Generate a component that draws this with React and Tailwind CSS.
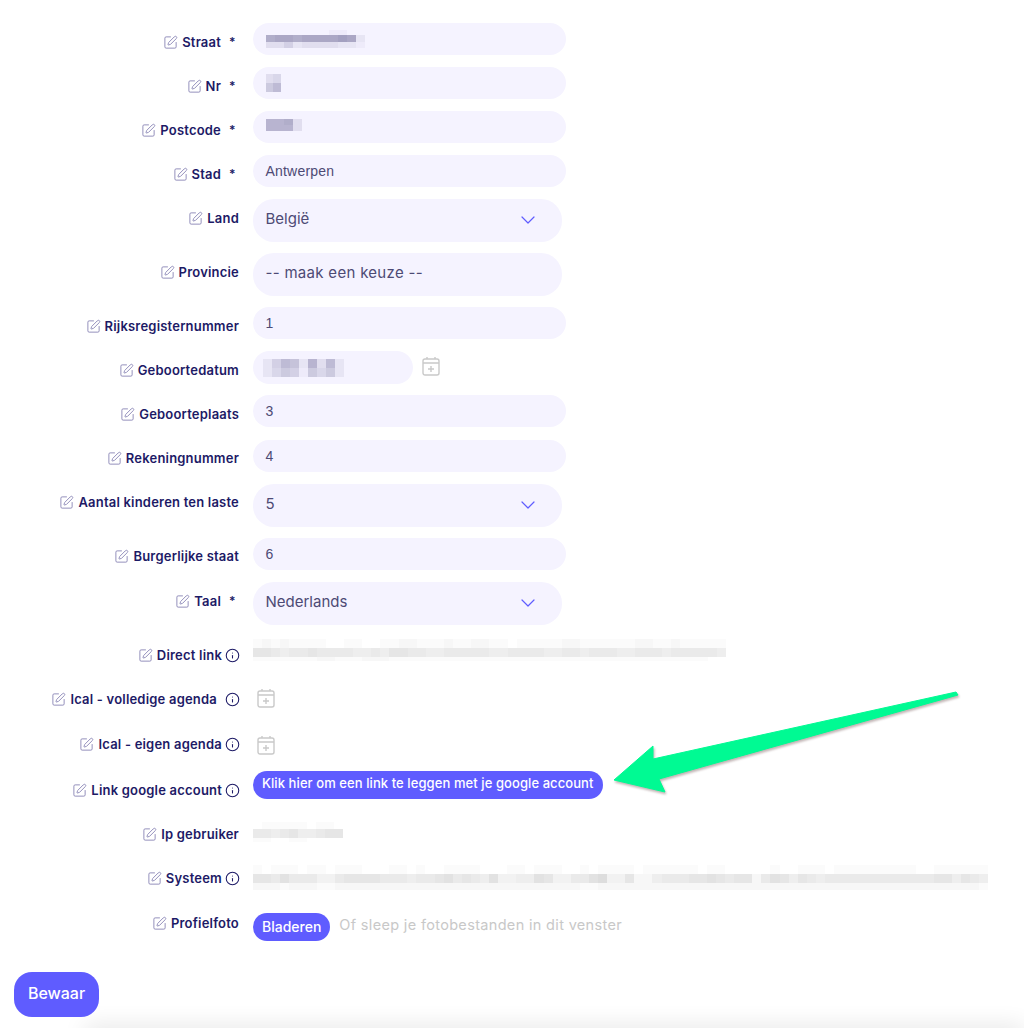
import React from 'react'
import { SquarePen, Info, ChevronDown } from 'lucide-react'

// opacity per cell, one hex digit per block of the pixelated (censored) values
function Mosaic({ rows, cell = 9, heights, color = '#8f8bb0', className = '' }) {
  return (
    <div className={'blur-[0.6px] ' + className}>
      {rows.map((row, i) => (
        <div key={i} className="flex">
          {row.split('').map((c, j) => (
            <div key={j} style={{ width: cell, height: heights[i], background: color, opacity: parseInt(c, 16) / 15 }} />
          ))}
        </div>
      ))}
    </div>
  )
}

function CalendarIcon({ className = '' }) {
  return (
    <svg viewBox="0 0 18 20" width="18" height="20" fill="none" stroke="#c9c9c9" strokeWidth="1.4" className={className}>
      <rect x="1" y="3" width="16" height="16" rx="2" />
      <path d="M1 7h16M5 1v2M13 1v2M9 10v6M6 13h6" />
    </svg>
  )
}

function Label({ text, required, info, infoGap = 'ml-[3px]', className = 'pt-[10px]' }) {
  return (
    <div className={'w-[239px] shrink-0 flex items-center justify-end text-[13px] leading-[18px] font-semibold tracking-[0.2px] text-[#1d1a66] ' + className}>
      <SquarePen size={15} strokeWidth={1.5} className="text-[#8d89b8] mr-[4px] shrink-0" />
      <span className="whitespace-nowrap">{text}</span>
      {required && <span className="ml-[8px] mr-[4px] w-[6px] text-[12px]">*</span>}
      {info && <Info size={15} strokeWidth={1.7} className={'shrink-0 text-[#1d1a66] -mr-[1px] ' + infoGap} />}
    </div>
  )
}

function TextRow({ label, required, value, mosaic, labelClass, tall }) {
  return (
    <div className={'flex items-start h-[32px] ' + (tall ? 'mb-[13px]' : 'mb-[12px]')}>
      <Label text={label} required={required} className={labelClass} />
      <div className="ml-[14px] w-[313px] h-[32px] rounded-[16px] bg-[#f5f3ff] flex items-center pl-[12.5px] text-[14px] tracking-[0.2px] text-[#4d4a75] font-['Liberation_Sans',sans-serif]">
        {value}
        {mosaic}
      </div>
    </div>
  )
}

function SelectRow({ label, required, value, labelClass, noArrow, valueClass = '' }) {
  return (
    <div className="flex items-start h-[43px] mb-[11px]">
      <Label text={label} required={required} className={labelClass} />
      <div className="ml-[14px] w-[309px] h-[43px] rounded-[21px] bg-[#f5f3ff] flex items-center justify-between pl-[12.5px] pr-[22px] text-[15px] text-[#4d4a75]">
        <span className={'pb-[2px] ' + valueClass}>{value}</span>
        {!noArrow && <ChevronDown size={24} strokeWidth={1.2} className="text-[#5f5cff] -mt-[1px]" />}
      </div>
    </div>
  )
}

export default function App() {
  return (
    <div className="relative h-[1028px] overflow-hidden bg-white font-['Inter',sans-serif]">
      <div className="pt-[23px]">
        <TextRow
          label="Straat"
          required
          mosaic={<Mosaic rows={['00000001100', 'abbabbbbcb2', '33523333221']} heights={[5, 7, 6]} />}
        />
        <TextRow label="Nr" required mosaic={<Mosaic rows={['340', '680']} cell={7.5} heights={[9, 9]} />} />
        <TextRow label="Postcode" required mosaic={<Mosaic rows={['99a3', '9993']} heights={[6, 6]} className="-mt-[4px]" />} />
        <TextRow label="Stad" required value="Antwerpen" />
        <SelectRow label="Land" value="België" />
        <SelectRow label="Provincie" value="-- maak een keuze --" noArrow valueClass="tracking-[0.3px]" />
        <TextRow label="Rijksregisternummer" value="1" />

        <div className="flex items-start h-[33px] mb-[11px]">
          <Label text="Geboortedatum" />
          <div className="ml-[14px] w-[160px] h-[33px] rounded-[17px] bg-[#f5f3ff] flex items-center pl-[10px]">
            <Mosaic rows={['258729382', '246516462']} heights={[9, 9]} />
          </div>
          <CalendarIcon className="ml-[9px] mt-[5px]" />
        </div>

        <TextRow label="Geboorteplaats" value="3" tall />
        <TextRow label="Rekeningnummer" value="4" labelClass="pt-[9px]" />
        <SelectRow label="Aantal kinderen ten laste" value="5" labelClass="pt-[9px]" />
        <TextRow label="Burgerlijke staat" value="6" labelClass="pt-[9px]" />
        <SelectRow label="Taal" required value="Nederlands" />

        <div className="flex items-start h-[33px] mb-[11px]">
          <Label text="Direct link" info />
          <Mosaic
            color="#c0c0c0"
            cell={9.1}
            heights={[9, 9, 4]}
            className="ml-[14px] mt-[3px]"
            rows={[
              '1212111100110011221112112211011111221111112211211111',
              '6654556555544546655445555544555544554555445554555554',
              '1111111221112221111111111111111111111111111111111100',
            ]}
          />
        </div>

        <div className="flex items-start h-[35px] mb-[11px]">
          <Label text="Ical - volledige agenda" info infoGap="ml-[8px]" />
          <CalendarIcon className="ml-[18px] mt-[8px]" />
        </div>

        <div className="flex items-start h-[35px] mb-[10px]">
          <Label text="Ical - eigen agenda" info className="pt-[9px]" />
          <CalendarIcon className="ml-[18px] mt-[9px]" />
        </div>

        <div className="flex items-start h-[33px] mb-[11px]">
          <Label text="Link google account" info />
          <button className="ml-[14px] h-[28px] px-[9px] pb-[2px] rounded-[14px] bg-[#5f5cff] text-white text-[13px] tracking-[0.08px] font-medium whitespace-nowrap">
            Klik hier om een link te leggen met je google account
          </button>
        </div>

        <div className="flex items-start h-[33px] mb-[11px]">
          <Label text="Ip gebruiker" />
          <Mosaic
            color="#c0c0c0"
            heights={[7, 9, 4]}
            className="ml-[14px] mt-[7px]"
            rows={['0111110110', '5545644566', '1100110000']}
          />
        </div>

        <div className="flex items-start h-[33px] mb-[21px]">
          <Label text="Systeem" info />
          <Mosaic
            color="#c0c0c0"
            cell={9.08}
            heights={[9, 9, 7]}
            className="ml-[14px] mt-[6px]"
            rows={[
              '101110110111000110100111100011011100101111011111101100000100111011111111100111111',
              '665755533566665554556756547334476335578336224555667656625764654555555555555664654',
              '222122211222222222222222222222222222112222222222222222222222222222222222222222221',
            ]}
          />
        </div>

        <div className="flex items-start h-[28px]">
          <Label text="Profielfoto" className="pt-[1px]" />
          <button className="ml-[14px] h-[28px] px-[9px] pb-[2px] rounded-[14px] bg-[#5f5cff] text-white text-[14px] font-medium">Bladeren</button>
          <span className="ml-[9px] pt-[1px] text-[14.5px] tracking-[0.33px] text-[#c8c8c8] whitespace-nowrap">Of sleep je fotobestanden in dit venster</span>
        </div>

        <button className="relative z-10 block ml-[14px] mt-[31px] w-[85px] h-[45px] rounded-[18px] bg-[#5f5cff] text-white text-[16px] font-medium pb-[3px]">Bewaar</button>
      </div>

      {/* bottom shade of the sticky bar */}
      <div className="absolute left-[85px] right-0 -bottom-[14px] h-[14px] shadow-[0_0_24px_rgba(0,0,0,0.14)]" />

      {/* annotation arrow */}
      <svg className="absolute left-[600px] top-[670px]" width="380" height="140" viewBox="0 0 380 140">
        <path d="M356 22 L358 25 L59 109 L65 122 L14 110 L53 76 L53 89 Z" fill="#00fa93" stroke="#00fa93" strokeWidth="1" strokeLinejoin="round" className="drop-shadow-[1px_2px_1px_rgba(120,90,90,0.45)]" />
      </svg>
    </div>
  )
}
